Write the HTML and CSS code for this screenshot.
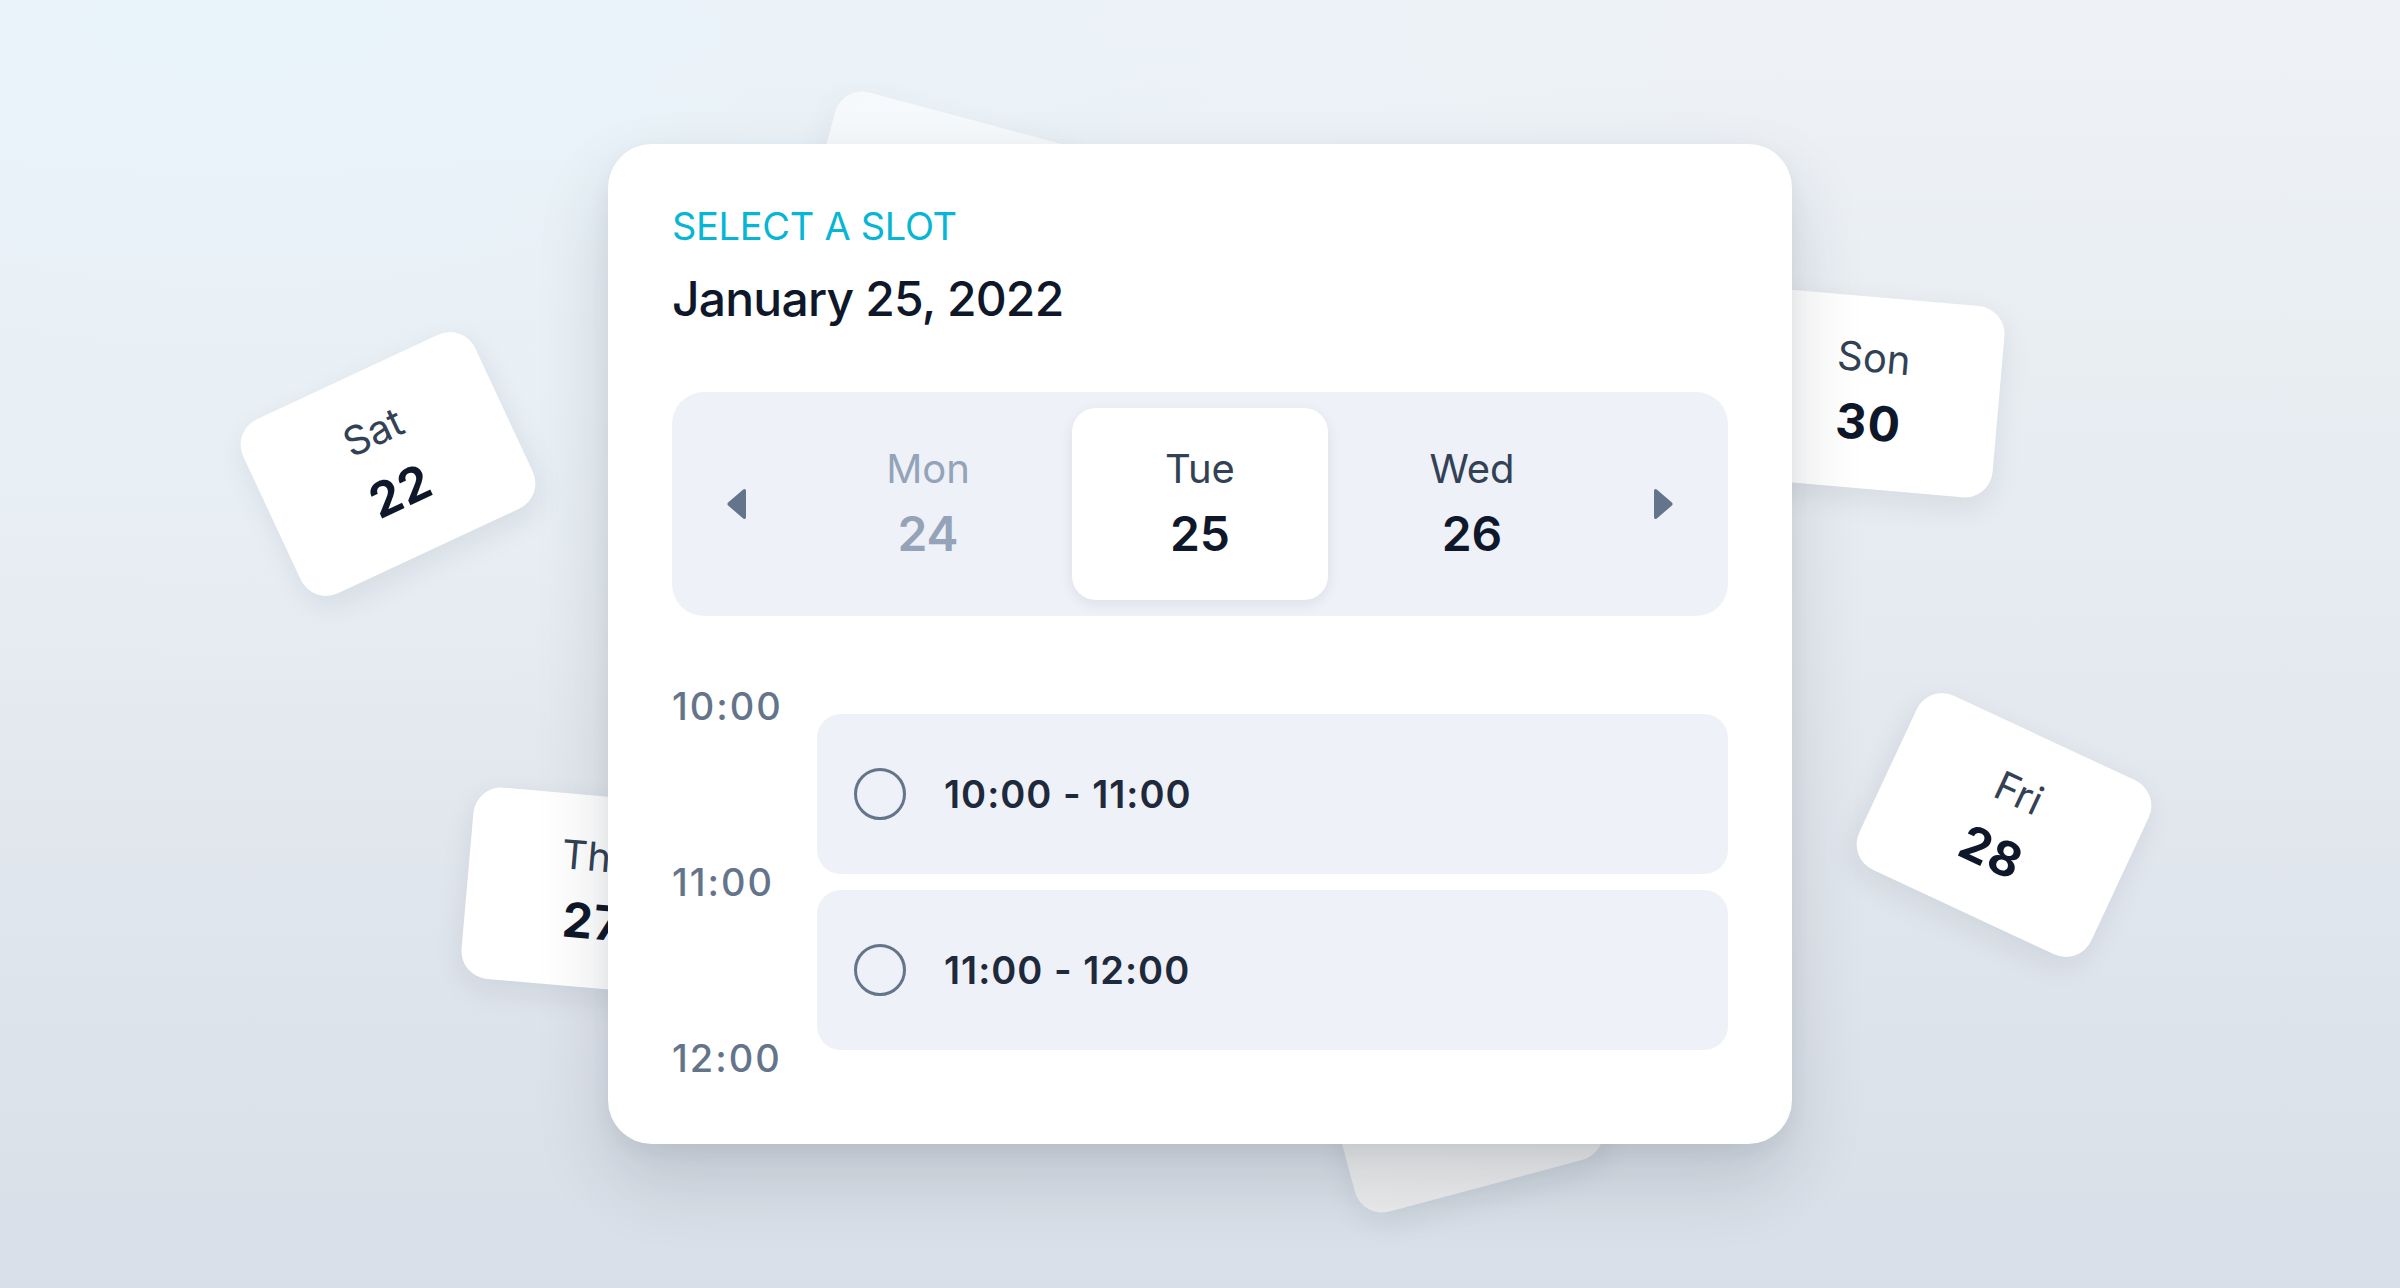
FILE: index.html
```html
<!DOCTYPE html>
<html lang="en">
<head>
<meta charset="utf-8">
<title>Select a slot</title>
<link rel="stylesheet" href="styles.css">
</head>
<body>
<div class="scene">
  <div class="float-card fc-top"></div>
  <div class="float-card fc-bottom"></div>
  <div class="float-card fc-sat"><span class="fc-day">Sat</span><span class="fc-num">22</span></div>
  <div class="float-card fc-thu"><span class="fc-day">Thu</span><span class="fc-num">27</span></div>
  <div class="float-card fc-son"><span class="fc-day">Son</span><span class="fc-num">30</span></div>
  <div class="float-card fc-fri"><span class="fc-day">Fri</span><span class="fc-num">28</span></div>

  <main class="card">
    <div class="eyebrow">SELECT A SLOT</div>
    <h1 class="date">January 25, 2022</h1>

    <div class="picker">
      <button class="arrow" aria-label="Previous">
        <svg width="20" height="32" viewBox="0 0 20 32"><path d="M17.2 1.6 L2.4 14.2 Q0.4 16 2.4 17.8 L17.2 30.4 Q20 32.4 20 28.8 V3.2 Q20 -0.4 17.2 1.6 Z" fill="#64748b"/></svg>
      </button>
      <div class="day day-muted"><span class="day-name">Mon</span><span class="day-num">24</span></div>
      <div class="day day-active"><span class="day-name">Tue</span><span class="day-num">25</span></div>
      <div class="day"><span class="day-name">Wed</span><span class="day-num">26</span></div>
      <button class="arrow" aria-label="Next">
        <svg width="20" height="32" viewBox="0 0 20 32"><path d="M2.8 1.6 L17.6 14.2 Q19.6 16 17.6 17.8 L2.8 30.4 Q0 32.4 0 28.8 V3.2 Q0 -0.4 2.8 1.6 Z" fill="#64748b"/></svg>
      </button>
    </div>

    <div class="timeline">
      <div class="hours">
        <span class="hour">10:00</span>
        <span class="hour">11:00</span>
        <span class="hour">12:00</span>
      </div>
      <div class="slots">
        <div class="slot"><span class="radio"></span><span class="slot-label">10:00 - 11:00</span></div>
        <div class="slot"><span class="radio"></span><span class="slot-label">11:00 - 12:00</span></div>
      </div>
    </div>
  </main>
</div>
</body>
</html>
```

FILE: styles.css
```css
* { box-sizing: border-box; }

html, body {
  margin: 0;
  padding: 0;
}

body {
  width: 2400px;
  height: 1288px;
  overflow: hidden;
  font-family: "Inter", "Noto Sans", sans-serif;
  background:
    radial-gradient(ellipse 1500px 760px at 10% 0%, rgba(232, 243, 250, 0.95) 0%, rgba(232, 243, 250, 0) 100%),
    linear-gradient(180deg, #eef2f6 0%, #e5eaf0 50%, #d8dfe8 100%);
}

.scene {
  position: relative;
  width: 2400px;
  height: 1288px;
  display: flex;
  align-items: center;
  justify-content: center;
}

/* floating background cards */
.float-card {
  position: absolute;
  width: 256px;
  height: 192px;
  border-radius: 28px;
  background: #ffffff;
  display: flex;
  flex-direction: column;
  align-items: center;
  justify-content: center;
  gap: 12px;
  box-shadow: 0 10px 30px rgba(15, 23, 42, 0.08);
}

.fc-day {
  font-size: 40px;
  line-height: 48px;
  color: #334155;
}

.fc-num {
  font-size: 48px;
  line-height: 58px;
  font-weight: 700;
  color: #0f172a;
  letter-spacing: 1px;
}

.fc-top {
  left: 813px;
  top: 115px;
  transform: rotate(15deg);
  opacity: 0.6;
}

.fc-bottom {
  left: 1333px;
  top: 997px;
  transform: rotate(-15deg);
  background: linear-gradient(180deg, #f2f2f3 0%, #ececed 100%);
}

.fc-sat {
  left: 260px;
  top: 368px;
  transform: rotate(-25deg);
}

.fc-thu {
  left: 467px;
  top: 796px;
  transform: rotate(5deg);
}

.fc-son {
  left: 1743px;
  top: 297px;
  transform: rotate(5deg);
}

.fc-fri {
  left: 1876px;
  top: 729px;
  transform: rotate(25deg);
}

/* main card */
.card {
  position: relative;
  z-index: 1;
  width: 1184px;
  height: 1000px;
  padding: 59px 64px 63px 64px;
  background: #ffffff;
  border-radius: 44px;
  box-shadow: 0 36px 72px rgba(30, 41, 59, 0.16), 0 8px 20px rgba(30, 41, 59, 0.05);
  display: flex;
  flex-direction: column;
}

.eyebrow {
  font-size: 38px;
  line-height: 46px;
  color: #06b6d4;
  font-weight: 400;
  letter-spacing: -0.3px;
}

.date {
  margin: 21px 0 0 0;
  font-size: 48px;
  line-height: 58px;
  font-weight: 500;
  color: #0f172a;
  letter-spacing: -0.8px;
}

.picker {
  margin-top: 64px;
  height: 224px;
  padding: 16px;
  background: #eef1f8;
  border-radius: 32px;
  display: grid;
  grid-template-columns: 96px repeat(3, 256px) 96px;
  column-gap: 16px;
  align-items: center;
}

.arrow {
  border: 0;
  background: transparent;
  padding: 0;
  display: flex;
  align-items: center;
  justify-content: center;
  height: 100%;
}

.day {
  height: 192px;
  border-radius: 24px;
  display: flex;
  flex-direction: column;
  align-items: center;
  justify-content: center;
  gap: 12px;
  color: #0f172a;
}

.day-name {
  font-size: 40px;
  line-height: 48px;
  color: #334155;
}

.day-num {
  font-size: 48px;
  line-height: 58px;
  font-weight: 600;
  color: #0f172a;
}

.day-muted .day-name,
.day-muted .day-num {
  color: #94a3b8;
}

.day-active {
  background: #ffffff;
  box-shadow: 0 4px 14px rgba(15, 23, 42, 0.08);
}

.timeline {
  margin-top: 67px;
  display: flex;
  align-items: center;
}

.hours {
  flex: 0 0 145px;
  height: 398px;
  display: flex;
  flex-direction: column;
  justify-content: space-between;
}

.hour {
  font-size: 38px;
  line-height: 46px;
  font-weight: 500;
  color: #64748b;
  letter-spacing: 2px;
}

.slots {
  flex: 1;
  display: flex;
  flex-direction: column;
  gap: 16px;
}

.slot {
  height: 160px;
  border-radius: 24px;
  background: #eef1f8;
  display: flex;
  align-items: center;
  padding-left: 37px;
  gap: 38px;
}

.radio {
  width: 52px;
  height: 52px;
  border-radius: 50%;
  border: 3px solid #64748b;
  flex: 0 0 auto;
}

.slot-label {
  font-size: 38px;
  line-height: 46px;
  font-weight: 600;
  color: #1e293b;
  letter-spacing: 1px;
}
```
